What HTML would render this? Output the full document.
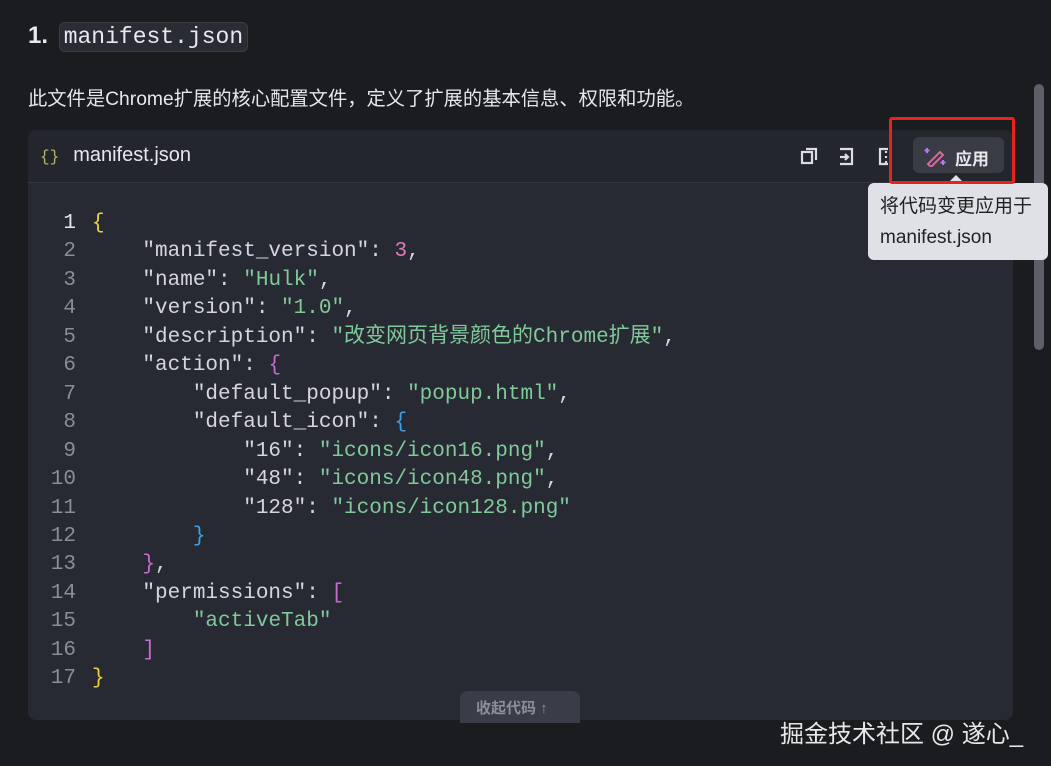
<!DOCTYPE html>
<html><head><meta charset="utf-8"><style>
body{margin:0;width:1051px;height:766px;background:#1b1c20;overflow:hidden;position:relative;font-family:"Liberation Sans","Noto Sans CJK SC",sans-serif;color:#e6e7ea}
.h{position:absolute;left:28px;top:22px;font-size:24px;font-weight:bold;color:#e8e9ec}
.h code{font-family:"Liberation Mono",monospace;font-weight:normal;font-size:23px;background:#2a2c33;border:1px solid #3a3c44;border-radius:6px;padding:1px 4px;margin-left:4px}
.p{position:absolute;left:28px;top:83px;font-size:19.3px;color:#e6e7ea}
.blk{position:absolute;left:28px;top:130px;width:985px;height:590px;background:#282a33;border-radius:8px;overflow:hidden}
.hd{height:52px;background:#24262d;border-bottom:1px solid #34363e;position:relative}
.hd .t{position:absolute;left:12px;top:14px;font-size:20px;color:#e6e7ea}
.hd .t b{font-weight:normal;color:#b7b36a;font-family:"Liberation Mono",monospace;font-size:16px;margin-right:14px}
.code{position:absolute;top:80px;left:0;font-family:"Liberation Mono","Noto Sans CJK SC",monospace;font-size:21px;line-height:28.45px;white-space:pre;color:#d4d6dc}
.ln{display:inline-block;width:48px;text-align:right;color:#8a8d96;margin-right:16px}
.ln1{color:#e6e7ea}
.s{color:#7fc99a}.n{color:#e07ab8}.y{color:#f0d03a}.m{color:#c86ad0}.bl{color:#3ea0e8}
.btn{position:absolute;left:885px;top:7px;width:91px;height:36px;background:#393b45;border-radius:6px}
.btn span{position:absolute;left:42px;top:8px;font-size:17px;font-weight:bold;color:#e6e7ea}
.red{position:absolute;left:889px;top:117px;width:126px;height:67px;border:3px solid #e8231f;border-radius:3px;box-sizing:border-box;z-index:3}
.tip{position:absolute;left:868px;top:183px;width:180px;height:77px;background:#dfe1e6;border-radius:6px;color:#222;font-size:19px;line-height:31px;padding:8px 0 0 12px;box-sizing:border-box;z-index:2;white-space:nowrap}
.tip:before{content:"";position:absolute;left:80px;top:-8px;border:8px solid transparent;border-top:0;border-bottom-color:#dfe1e6}
.sb{position:absolute;left:1034px;top:84px;width:10px;height:266px;background:#5d606a;border-radius:5px;z-index:1}
.col{position:absolute;left:460px;top:691px;width:120px;height:32px;background:#3a3c48;border-radius:8px 8px 0 0;font-size:15px;font-weight:bold;color:#8c8f99;padding:6px 0 0 16px;box-sizing:border-box}
.wm{position:absolute;left:780px;top:714px;font-size:24px;color:#e8e8ea}
</style></head><body>
<div class="h">1. <code>manifest.json</code></div>
<div class="p">此文件是Chrome扩展的核心配置文件，定义了扩展的基本信息、权限和功能。</div>
<div class="blk">
<div class="hd"><div class="t"><b>{}</b>manifest.json</div>
<svg style="position:absolute;left:772px;top:15px" width="120" height="22" fill="none" stroke="#dcdde2" stroke-width="2.2">
<rect x="2" y="7" width="10" height="11"/><path d="M6 4h10v11"/>
<path d="M40 4h12v15h-12M40 12h8M45 9l3 3-3 3"/>
<path d="M88 4h-8v15h8M86 6v2M86 16v2M86 11v2"/>
</svg>
<div class="btn"><svg style="position:absolute;left:10px;top:8px" width="24" height="22" fill="none" stroke="#d26a9a" stroke-width="2"><path d="M5 19L17 7l3 3L8 22z"/><path d="M4 3v5M1.5 5.5h5M20 15v5M17.5 17.5h5" stroke="#b47be8"/></svg><span>应用</span></div>
</div>
<div class="code"><span class="ln ln1">1</span><span class="y">{</span>
<span class="ln">2</span>    "manifest_version": <span class="n">3</span>,
<span class="ln">3</span>    "name": <span class="s">"Hulk"</span>,
<span class="ln">4</span>    "version": <span class="s">"1.0"</span>,
<span class="ln">5</span>    "description": <span class="s">"改变网页背景颜色的Chrome扩展"</span>,
<span class="ln">6</span>    "action": <span class="m">{</span>
<span class="ln">7</span>        "default_popup": <span class="s">"popup.html"</span>,
<span class="ln">8</span>        "default_icon": <span class="bl">{</span>
<span class="ln">9</span>            "16": <span class="s">"icons/icon16.png"</span>,
<span class="ln">10</span>            "48": <span class="s">"icons/icon48.png"</span>,
<span class="ln">11</span>            "128": <span class="s">"icons/icon128.png"</span>
<span class="ln">12</span>        <span class="bl">}</span>
<span class="ln">13</span>    <span class="m">}</span>,
<span class="ln">14</span>    "permissions": <span class="m">[</span>
<span class="ln">15</span>        <span class="s">"activeTab"</span>
<span class="ln">16</span>    <span class="m">]</span>
<span class="ln">17</span><span class="y">}</span></div>
</div>
<div class="col">收起代码 ↑</div>
<div class="red"></div>
<div class="tip">将代码变更应用于<br>manifest.json</div>
<div class="sb"></div>
<div class="wm">掘金技术社区 @ 遂心_</div>
</body></html>
